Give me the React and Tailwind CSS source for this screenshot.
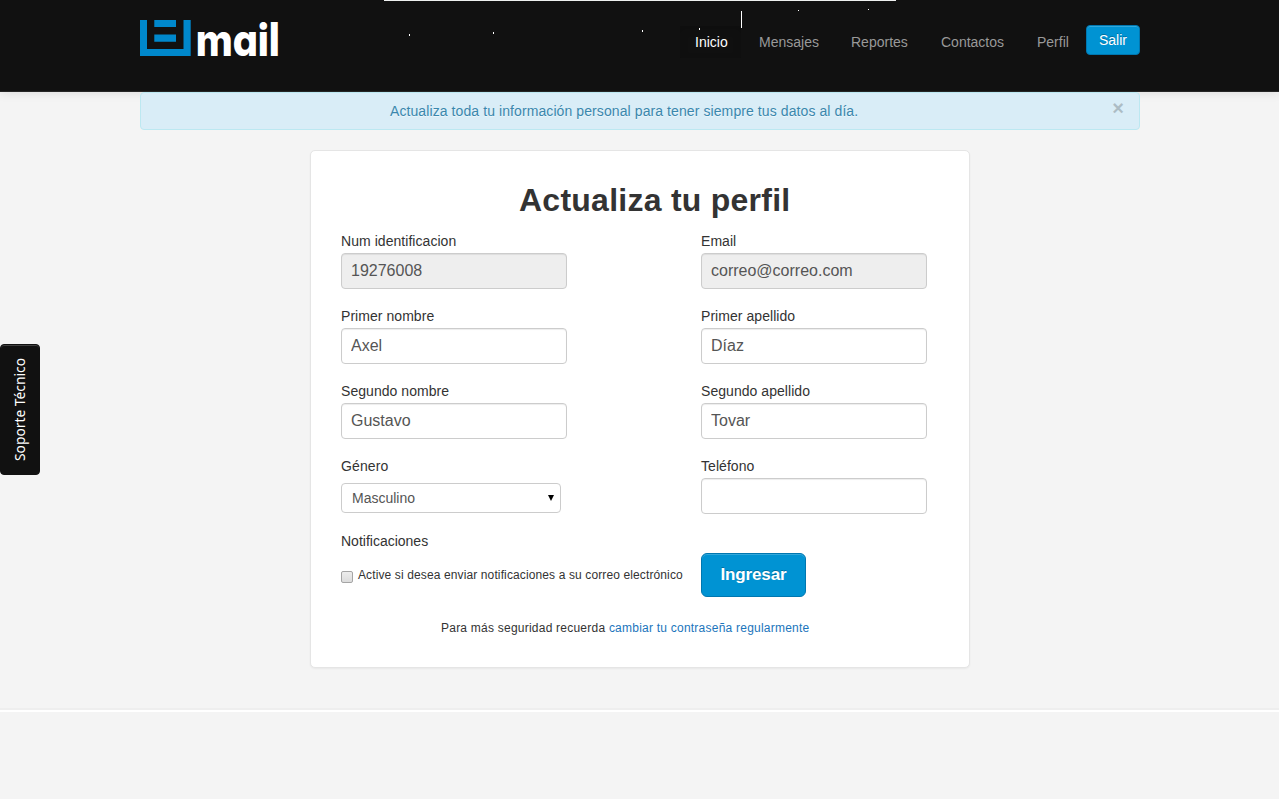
const navItems = [
  { label: "Inicio", box: "mr-[3px] w-[61px] text-white bg-[#101010] shadow-[inset_0_3px_8px_rgba(0,0,0,0.125)]" },
  { label: "Mensajes", box: "w-[92px] text-[#999]" },
  { label: "Reportes", box: "w-[90px] text-[#999]" },
  { label: "Contactos", box: "w-24 text-[#999]" },
  { label: "Perfil", box: "w-16 text-[#999]" },
];

function Logo() {
  return (
    <a href="#" className="flex h-[72px] w-[150px] items-start">
      <svg className="mt-5 block h-9 w-[51px] shrink-0" viewBox="0 0 51 36" fill="#0088cc">
        <path d="M0 0H7V29H43.5V0H50.7V36H0Z" />
        <path d="M14.3 0H36V7H14.3ZM14.3 14.5H36V21.7H14.3Z" />
      </svg>
      <span className="ml-[5px] mt-[10px] origin-left scale-x-[0.88] font-['Inter_Display','Inter',sans-serif] text-[46px] font-extrabold leading-[58px] tracking-[0.5px] text-white [font-feature-settings:'cv11']">
        mail
      </span>
    </a>
  );
}

function Specks() {
  return (
    <svg className="pointer-events-none absolute left-0 top-0 z-10 h-[40px] w-[1279px]" viewBox="0 0 1279 40" shapeRendering="crispEdges" fill="#fff">
      <rect x="384" y="0" width="512" height="1" fill="#eef0ef" />
      <rect x="409" y="34" width="1" height="2" />
      <rect x="493" y="32" width="1" height="2" />
      <rect x="642" y="30" width="1" height="2" />
      <rect x="699" y="28" width="1" height="2" />
      <rect x="741" y="11" width="1" height="17" />
      <rect x="798" y="10" width="1" height="1" />
      <rect x="868" y="9" width="1" height="1" />
    </svg>
  );
}

function Field({ label, value = "", disabled = false }) {
  return (
    <div className="h-[75px]">
      <label className="block h-[23px] pt-px text-sm leading-5 tracking-[0.05px]">{label}</label>
      <input
        type="text"
        defaultValue={value}
        disabled={disabled}
        className="block h-9 w-[226px] rounded border border-[#ccc] bg-white px-[9px] pb-px text-base text-[#555] shadow-[inset_0_1px_1px_rgba(0,0,0,0.075)] disabled:bg-[#eee]"
      />
    </div>
  );
}

export default function App() {
  return (
    <div className="min-h-[799px] bg-[#f4f4f4] font-['Liberation_Sans',Arial,sans-serif] text-sm leading-5 text-[#333]">
      <header className="relative h-[92px] border-b border-[#252525] bg-[#111] shadow-[0_1px_10px_rgba(0,0,0,0.1)]">
        <Specks />
        <div className="ml-[140px] flex w-[1000px] items-start">
          <Logo />
          <nav className="ml-auto mt-[26px] flex">
            {navItems.map((n) => (
              <a key={n.label} href="#" className={"flex h-[32px] items-center whitespace-nowrap pl-[15px] " + n.box}>
                {n.label}
              </a>
            ))}
          </nav>
          <button className="mt-[25px] h-[30px] w-[54px] rounded border border-[#0077b0] bg-[#0093d3] text-sm leading-5 text-white shadow-[inset_0_1px_0_rgba(255,255,255,0.2)] [text-shadow:0_-1px_0_rgba(0,0,0,0.25)]">
            Salir
          </button>
        </div>
      </header>

      <div className="relative ml-[140px] flex h-[38px] w-[1000px] items-center rounded border border-[#bce8f1] bg-[#d9edf7] pl-[249px] text-[#3a87ad] [text-shadow:0_1px_0_rgba(255,255,255,0.5)]">
        <span className="whitespace-nowrap tracking-[0.09px]">Actualiza toda tu información personal para tener siempre tus datos al día.</span>
        <button className="mb-[6px] ml-auto mr-[15px] text-xl font-bold leading-5 text-black opacity-20">×</button>
      </div>

      <main className="ml-[310px] mt-5 h-[518px] w-[660px] rounded-[5px] border border-[#e5e5e5] bg-white px-[30px] pt-[29px] shadow-[0_1px_2px_rgba(0,0,0,0.05)]">
        <h1 className="h-[50px] pl-[178px] text-[32px] font-bold leading-10 tracking-[0.25px]">Actualiza tu perfil</h1>
        <form className="grid grid-cols-[360px_238px]">
          <Field label="Num identificacion" value="19276008" disabled />
          <Field label="Email" value="correo@correo.com" disabled />
          <Field label="Primer nombre" value="Axel" />
          <Field label="Primer apellido" value="Díaz" />
          <Field label="Segundo nombre" value="Gustavo" />
          <Field label="Segundo apellido" value="Tovar" />
          <div className="h-[75px]">
            <label className="block h-[28px] pt-px tracking-[0.1px]">Género</label>
            <button type="button" className="flex h-[30px] w-[220px] items-center rounded border border-[#ccc] bg-white pl-[10px] pr-[6px] text-[#555]">
              Masculino
              <svg className="mb-px ml-auto h-[6px] w-[6px]" viewBox="0 0 6 6">
                <path d="M0 0H6L3 6Z" fill="#000" />
              </svg>
            </button>
          </div>
          <Field label="Teléfono" />
          <div className="h-[75px]">
            <p className="pt-px">Notificaciones</p>
            <label className="mt-4 flex items-center whitespace-nowrap text-xs tracking-[0.12px]">
              <span className="mr-[5px] mt-1 h-3 w-3 rounded-[2px] border border-[#a5a5a5] bg-linear-to-b from-[#ededed] to-[#dcdcdc]" />
              Active si desea enviar notificaciones a su correo electrónico
            </label>
          </div>
          <div className="pt-[23px]">
            <button type="button" className="h-11 w-[105px] rounded-md border border-[#0077b0] bg-[#0093d3] text-[17px] font-bold tracking-[-0.15px] text-white shadow-[inset_0_1px_0_rgba(255,255,255,0.2)] [text-shadow:0_-1px_0_rgba(0,0,0,0.25)]">
              Ingresar
            </button>
          </div>
        </form>
        <p className="mt-[13px] whitespace-nowrap pl-[100px] text-xs leading-5 tracking-[0.23px]">
          Para más seguridad recuerda{" "}
          <a href="#" className="text-[#1b75bc]">cambiar tu contraseña regularmente</a>
        </p>
      </main>

      <hr className="mt-[40px] h-1 border-b-2 border-t-2 border-b-white border-t-[#eee]" />

      <button className="absolute left-0 top-[344px] flex h-[131px] w-10 items-center justify-center rounded border border-[#111] bg-[#111] font-['Noto_Sans',sans-serif] text-sm text-white shadow-[inset_0_1px_0_rgba(255,255,255,0.2)]">
        <span className="rotate-180 whitespace-nowrap text-[13.8px] [writing-mode:vertical-rl]">Soporte Técnico</span>
      </button>
    </div>
  );
}
